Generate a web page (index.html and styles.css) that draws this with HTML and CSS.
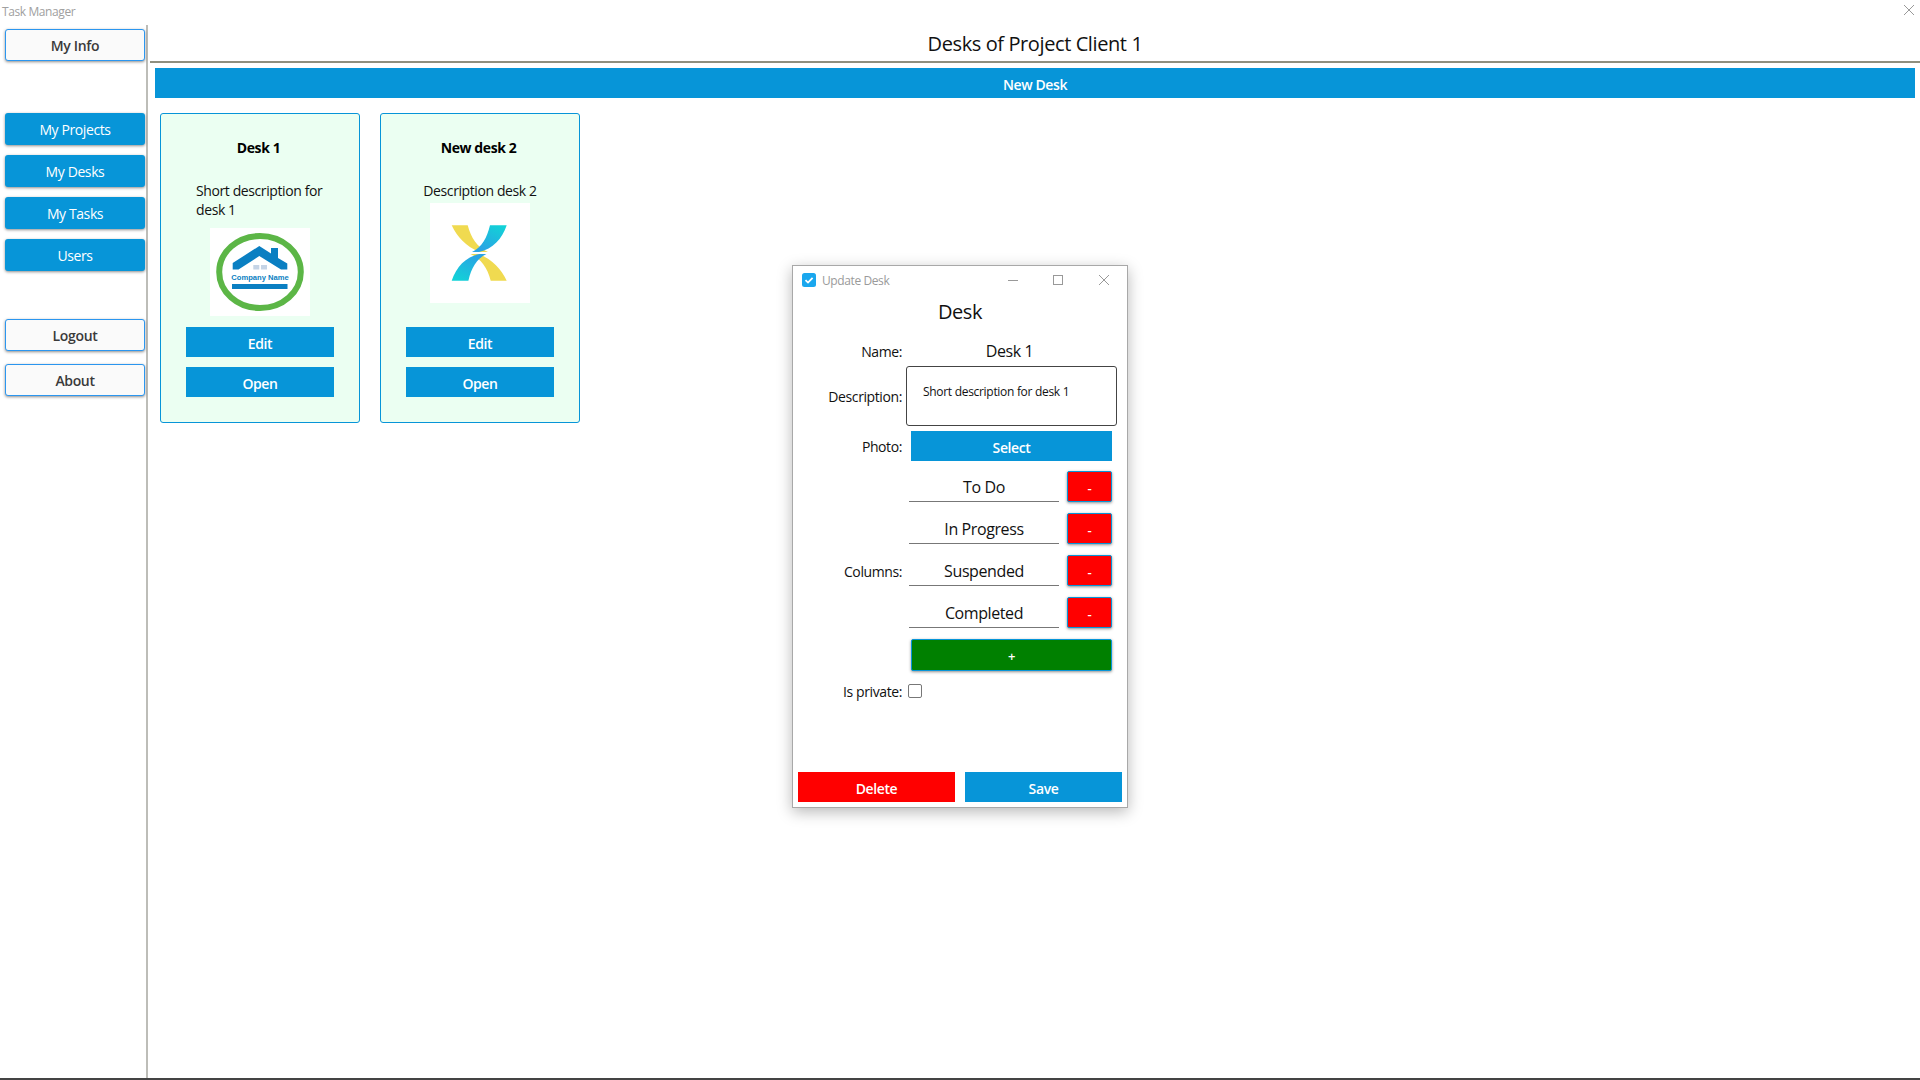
FILE: index.html
```html
<!DOCTYPE html>
<html lang="en">
<head>
<meta charset="utf-8">
<title>Task Manager</title>
<link rel="stylesheet" href="styles.css">
</head>
<body>
<header class="titlebar">
  <span class="titlebar-text">Task Manager</span>
  <svg class="close-icon" viewBox="0 0 10 10"><path d="M0 0L10 10M10 0L0 10"/></svg>
</header>
<div class="app">
  <nav class="sidebar">
    <button class="side-btn light">My Info</button>
    <div class="side-group">
      <button class="side-btn blue">My Projects</button>
      <button class="side-btn blue">My Desks</button>
      <button class="side-btn blue">My Tasks</button>
      <button class="side-btn blue">Users</button>
    </div>
    <div class="side-group-bottom">
      <button class="side-btn light">Logout</button>
      <button class="side-btn light">About</button>
    </div>
  </nav>
  <main class="main">
    <h1 class="page-title">Desks of Project Client 1</h1>
    <button class="flat-btn new-desk">New Desk</button>
    <section class="cards">
      <article class="card">
        <h2 class="card-title">Desk 1</h2>
        <p class="card-desc">Short description for desk 1</p>
        <div class="card-photo">
          <svg class="logo-house" viewBox="0 0 100 88">
            <rect width="100" height="88" fill="#fff"/>
            <ellipse cx="50" cy="44" rx="40.8" ry="36" fill="none" stroke="#5cb646" stroke-width="6"/>
            <path fill="#0a7fc2" d="M22.7 35L49.3 18L61 25.5V20H68V30L77.3 35.5V41.5H71L49.3 28L28.5 41.5H22.7Z"/>
            <rect x="43.3" y="37" width="6" height="4.5" fill="#c5d4e6"/>
            <rect x="51" y="37" width="6" height="4.5" fill="#c5d4e6"/>
            <text class="logo-text" x="50" y="51.5" text-anchor="middle">Company Name</text>
            <rect x="22" y="56" width="55.5" height="5" fill="#0a7fc2"/>
          </svg>
        </div>
        <button class="flat-btn card-btn">Edit</button>
        <button class="flat-btn card-btn">Open</button>
      </article>
      <article class="card">
        <h2 class="card-title">New desk 2</h2>
        <p class="card-desc">Description desk 2</p>
        <div class="card-photo">
          <svg class="logo-x" viewBox="0 0 100 100">
            <defs>
              <linearGradient id="gradTop" x1="1" y1="0" x2="0.4" y2="1">
                <stop offset="0" stop-color="#10d6d6"/>
                <stop offset="1" stop-color="#2aa3e4"/>
              </linearGradient>
              <linearGradient id="gradBottom" x1="0" y1="1" x2="0.6" y2="0">
                <stop offset="0" stop-color="#10d6d6"/>
                <stop offset="1" stop-color="#2aa3e4"/>
              </linearGradient>
            </defs>
            <rect width="100" height="100" fill="#fff"/>
            <path fill="#f0da50" d="M21.7 22.3H37.7C41 35 47 44 58 49H49C36 43 27 34 21.7 22.3Z"/>
            <path fill="#f0da50" d="M76.7 77.7H60.7C57.4 65 51.4 56 40.4 51H49.4C62.4 57 71.4 66 76.7 77.7Z"/>
            <path fill="url(#gradTop)" d="M60 22.3H76.7C72 36 63 46 49 49H42C52 44 57 35 60 22.3Z"/>
            <path fill="url(#gradBottom)" d="M38.4 77.7H21.7C26.4 64 35.4 54 49.4 51H56.4C46.4 56 41.4 65 38.4 77.7Z"/>
          </svg>
        </div>
        <button class="flat-btn card-btn">Edit</button>
        <button class="flat-btn card-btn">Open</button>
      </article>
    </section>
  </main>
</div>

<div class="dialog">
  <div class="dialog-bar">
    <svg class="dialog-icon" viewBox="0 0 14 14">
      <rect width="14" height="14" rx="2.5" fill="#1aa7ee"/>
      <path d="M3.5 7.2L6 9.6L10.6 4.8" fill="none" stroke="#fff" stroke-width="1.8"/>
    </svg>
    <span class="dialog-title">Update Desk</span>
    <svg class="win-ctrl win-min" viewBox="0 0 10 10"><path d="M0 5.5H10"/></svg>
    <svg class="win-ctrl win-max" viewBox="0 0 10 10"><rect x="0.5" y="0.5" width="9" height="9"/></svg>
    <svg class="win-ctrl win-close" viewBox="0 0 10 10"><path d="M0 0L10 10M10 0L0 10"/></svg>
  </div>
  <h2 class="dialog-heading">Desk</h2>
  <div class="form">
    <label class="form-label">Name:</label>
    <div class="name-value">Desk 1</div>

    <label class="form-label">Description:</label>
    <div class="desc-box">Short description for desk 1</div>

    <label class="form-label row-select">Photo:</label>
    <button class="flat-btn select-btn row-select">Select</button>

    <label class="form-label row-columns">Columns:</label>
    <div class="columns">
      <div class="col-row"><div class="col-name">To Do</div><button class="mini-btn red">-</button></div>
      <div class="col-row"><div class="col-name">In Progress</div><button class="mini-btn red">-</button></div>
      <div class="col-row"><div class="col-name">Suspended</div><button class="mini-btn red">-</button></div>
      <div class="col-row"><div class="col-name">Completed</div><button class="mini-btn red">-</button></div>
      <button class="mini-btn green">+</button>
    </div>

    <label class="form-label row-private">Is private:</label>
    <div class="row-private private-cell"><span class="checkbox"></span></div>
  </div>
  <div class="dialog-footer">
    <button class="flat-btn danger">Delete</button>
    <button class="flat-btn">Save</button>
  </div>
</div>
</body>
</html>
```

FILE: styles.css
```css
* { box-sizing: border-box; }

html, body { margin: 0; padding: 0; }

body {
  width: 1920px;
  height: 1080px;
  overflow: hidden;
  display: flex;
  flex-direction: column;
  position: relative;
  background: #fff;
  color: #111;
  font-family: "Open Sans", "Noto Sans", "Liberation Sans", sans-serif;
  font-size: 14px;
  letter-spacing: -0.4px;
  border-bottom: 2px solid #444;
}

button {
  font-family: inherit;
  letter-spacing: inherit;
  cursor: pointer;
}

.titlebar {
  height: 25px;
  flex: none;
  display: flex;
  justify-content: space-between;
  padding: 5px 6px 0 2px;
}

.titlebar-text {
  font-size: 12px;
  line-height: 14px;
  color: #a0a0a0;
}

.close-icon {
  width: 10px;
  height: 10px;
  fill: none;
  stroke: #999;
  stroke-width: 1;
}

.app {
  flex: 1;
  display: flex;
  min-height: 0;
}

.sidebar {
  width: 148px;
  flex: none;
  border-right: 2px solid #bdbdb8;
  padding: 4px 1px 0 5px;
  display: flex;
  flex-direction: column;
}

.side-btn {
  width: 140px;
  height: 32px;
  padding: 0;
  border-radius: 3px;
  font-size: 14px;
  box-shadow: 0 1px 3px rgba(0, 0, 0, 0.45);
}

.side-btn.light {
  background: #fafafa;
  border: 1px solid #2b96ef;
  color: #3a3a3a;
  font-weight: 600;
  letter-spacing: -0.35px;
}

.side-btn.blue {
  background: #0795d8;
  border: none;
  color: #fff;
}

.side-group {
  margin-top: 52px;
  display: flex;
  flex-direction: column;
  gap: 10px;
}

.side-group-bottom {
  margin-top: 48px;
  display: flex;
  flex-direction: column;
  gap: 13px;
}

.main {
  flex: 1;
  min-width: 0;
  padding-left: 2px;
  display: flex;
  flex-direction: column;
}

.page-title {
  margin: 0;
  height: 38px;
  flex: none;
  border-bottom: 2px solid #8f8f7f;
  font-size: 20px;
  font-weight: 400;
  line-height: 38px;
  text-align: center;
  color: #111;
  letter-spacing: -0.4px;
}

.flat-btn {
  height: 30px;
  padding: 3px 0 0;
  border: none;
  background: #0795d8;
  color: #fff;
  font-size: 14px;
  font-weight: 600;
  line-height: 27px;
}

.new-desk {
  flex: none;
  margin: 5px 5px 0;
}

.cards {
  display: flex;
  gap: 20px;
  padding: 15px 0 0 10px;
}

.card {
  width: 200px;
  height: 310px;
  padding: 24px 25px 25px;
  border: 1px solid #0795d8;
  border-radius: 3px;
  background: #ebfff2;
  display: flex;
  flex-direction: column;
  align-items: center;
}

.card-title {
  margin: 0 0 23px;
  font-size: 14px;
  font-weight: 700;
  line-height: 20px;
  color: #000;
  position: relative;
  left: -1.5px;
}

.card-desc {
  margin: 0 0 3px;
  max-width: 128px;
  font-size: 14px;
  line-height: 19px;
  color: #111;
}

.card-photo {
  width: 100px;
  height: 100px;
  flex: none;
  display: flex;
  align-items: center;
  justify-content: center;
}

.logo-house { width: 100px; height: 88px; display: block; }
.logo-x { width: 100px; height: 100px; display: block; }

.logo-text {
  font-family: "Liberation Sans", sans-serif;
  font-size: 7.6px;
  font-weight: 700;
  letter-spacing: 0;
  fill: #0a7fc2;
}

.card-btn {
  width: 148px;
  flex: none;
  margin-top: 10px;
}

.card-photo + .card-btn { margin-top: auto; }

/* Floating window */
.dialog {
  position: absolute;
  left: 792px;
  top: 265px;
  width: 336px;
  height: 543px;
  border: 1px solid #a8a8a8;
  background: #fff;
  box-shadow: 0 4px 14px rgba(0, 0, 0, 0.28);
  display: flex;
  flex-direction: column;
}

.dialog-bar {
  height: 31px;
  flex: none;
  display: flex;
  align-items: center;
  padding: 0 18px 3px 9px;
}

.dialog-icon { width: 14px; height: 14px; flex: none; }

.dialog-title {
  margin-left: 6px;
  font-size: 12px;
  color: #9a9a9a;
  flex: 1;
}

.win-ctrl {
  width: 10px;
  height: 10px;
  flex: none;
  fill: none;
  stroke: #999;
  stroke-width: 1;
}

.win-max { margin-left: 35px; }
.win-close { margin-left: 36px; }

.dialog-heading {
  margin: 0;
  height: 30px;
  flex: none;
  font-size: 20px;
  font-weight: 400;
  line-height: 30px;
  text-align: center;
  color: #111;
  letter-spacing: -0.4px;
}

.form {
  margin-top: 9px;
  display: grid;
  grid-template-columns: 109px 211px;
  column-gap: 4px;
  align-items: center;
}

.form-label {
  font-size: 14px;
  line-height: 20px;
  padding-top: 2px;
  text-align: right;
  color: #111;
}

.name-value {
  height: 30px;
  font-size: 16px;
  line-height: 31px;
  text-align: center;
  padding-right: 4px;
  letter-spacing: -0.4px;
}

.desc-box {
  height: 60px;
  border: 1px solid #444;
  border-radius: 3px;
  padding: 16px 0 0 16px;
  font-size: 12px;
  line-height: 18px;
  letter-spacing: -0.3px;
  color: #111;
}

.row-select { margin-top: 5px; }

.select-btn {
  margin-left: 5px;
  margin-right: 5px;
}

.row-columns { margin-top: 10px; }

.columns {
  margin-top: 10px;
  display: flex;
  flex-direction: column;
  gap: 11px;
}

.col-row {
  height: 31px;
  display: flex;
  justify-content: space-between;
  padding: 0 5px 0 3px;
}

.col-name {
  width: 150px;
  height: 31px;
  border-bottom: 1px solid #777;
  font-size: 16px;
  line-height: 33px;
  text-align: center;
  letter-spacing: -0.4px;
}

.mini-btn {
  padding: 2px 0 0;
  border: 1px solid #0795d8;
  border-radius: 2px;
  color: #fff;
  font-size: 13px;
  font-weight: 600;
  box-shadow: 0 1px 3px rgba(0, 0, 0, 0.45);
}

.mini-btn.red {
  width: 45px;
  height: 31px;
  background: #f00;
}

.mini-btn.green {
  height: 32px;
  margin: 0 5px;
  background: #008000;
}

.row-private { margin-top: 14px; }

.form-label.row-private { margin-top: 11px; margin-bottom: -3px; padding-top: 0; }

.private-cell {
  display: flex;
  padding-left: 2px;
  position: relative;
  top: -1px;
}

.checkbox {
  width: 14px;
  height: 14px;
  border: 1.5px solid #777;
  border-radius: 2px;
  background: #fff;
}

.dialog-footer {
  margin-top: auto;
  display: flex;
  gap: 10px;
  padding: 0 5px 5px;
}

.dialog-footer .flat-btn { flex: 1; }

.flat-btn.danger { background: #f00; }
```
